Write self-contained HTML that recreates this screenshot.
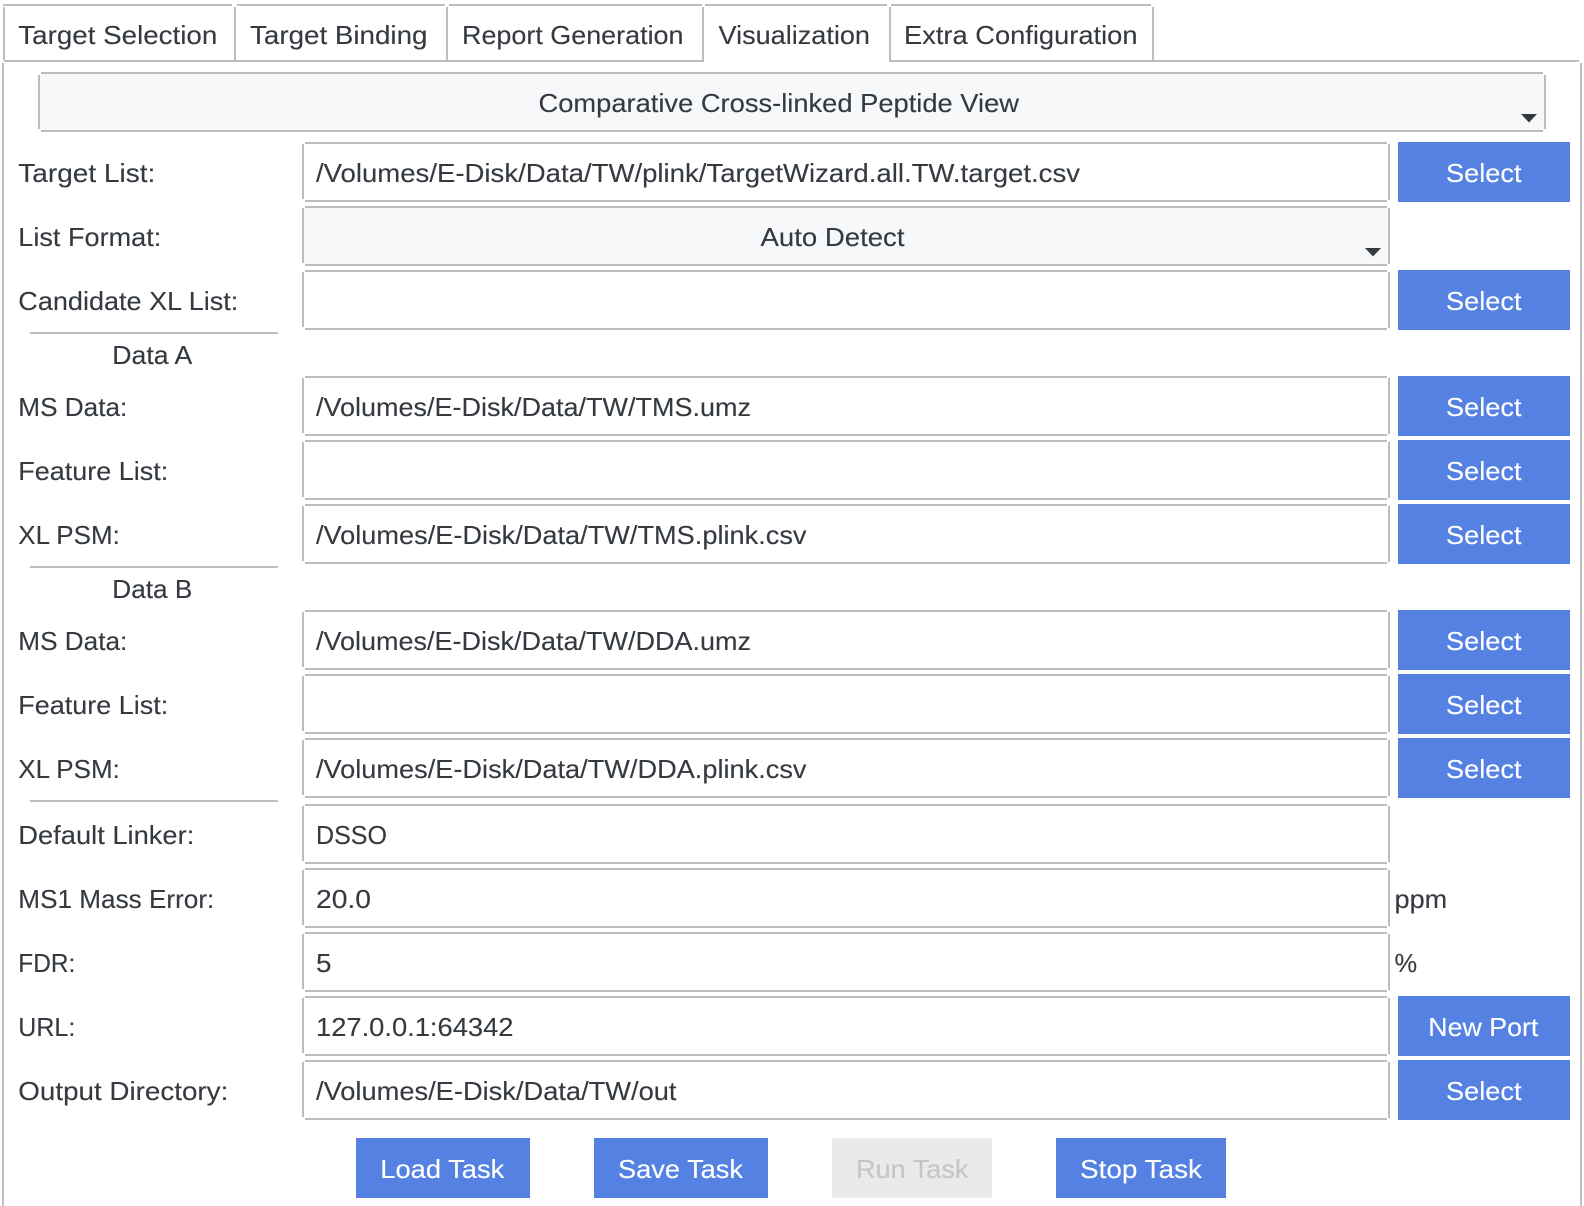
<!DOCTYPE html>
<html><head><meta charset="utf-8"><title>Visualization</title>
<style>
html,body{margin:0;padding:0;background:#fff;width:1584px;height:1206px;overflow:hidden}
svg{display:block}
text{font-family:"Liberation Sans",sans-serif;font-size:26px;fill:#343a40;stroke:#343a40;stroke-width:.12px}
.w{fill:#fff;stroke:#fff}.d{fill:#c4c6c6;stroke:#c4c6c6}
.b{fill:#bdbdbd;stroke:none}.p{fill:#5582e2}
</style></head><body>
<svg width="1584" height="1206" viewBox="0 0 1584 1206" xmlns="http://www.w3.org/2000/svg">
<defs>
<g id="inp">
<rect x="305" y="0" width="1082" height="2" class="b"/>
<rect x="302" y="2" width="2" height="55" class="b"/>
<rect x="305" y="58" width="1082" height="2" class="b"/>
<rect x="1388" y="2" width="2" height="56" class="b"/>
</g>
<rect id="btn" x="1398" y="0" width="172" height="60" class="p"/>
</defs>

<!-- tabs -->
<rect x="3" y="4" width="229" height="2" class="b"/>
<rect x="237" y="4" width="208" height="2" class="b"/>
<rect x="449" y="4" width="253" height="2" class="b"/>
<rect x="705" y="4" width="182" height="2" class="b"/>
<rect x="891" y="4" width="260" height="2" class="b"/>
<rect x="3" y="7" width="2" height="53" class="b"/>
<rect x="234" y="7" width="2" height="53" class="b"/>
<rect x="446" y="7" width="2" height="53" class="b"/>
<rect x="702" y="7" width="2" height="55" class="b"/>
<rect x="889" y="7" width="2" height="55" class="b"/>
<rect x="1152" y="7" width="2" height="53" class="b"/>
<rect x="4" y="60" width="700" height="2" class="b"/>
<rect x="889" y="60" width="690" height="2" class="b"/>
<rect x="2" y="63" width="2" height="1143" class="b"/>
<rect x="1580" y="63" width="2" height="1143" class="b"/>
<text x="18.3" y="44" textLength="199" lengthAdjust="spacingAndGlyphs">Target Selection</text>
<text x="250" y="44" textLength="177.500" lengthAdjust="spacingAndGlyphs">Target Binding</text>
<text x="462" y="44" textLength="221.500" lengthAdjust="spacingAndGlyphs">Report Generation</text>
<text x="718.500" y="44" textLength="151.500" lengthAdjust="spacingAndGlyphs">Visualization</text>
<text x="904" y="44" textLength="233.500" lengthAdjust="spacingAndGlyphs">Extra Configuration</text>

<!-- top select -->
<rect x="40" y="74" width="1504" height="56" fill="#f7f8f9"/>
<rect x="41" y="72" width="1502" height="2" class="b"/>
<rect x="38" y="75" width="2" height="54" class="b"/>
<rect x="41" y="130" width="1502" height="2" class="b"/>
<rect x="1544" y="75" width="2" height="54" class="b"/>
<polygon points="1521,114 1537,114 1529,122.5" fill="#343a40"/>
<text x="538.500" y="112" textLength="480.500" lengthAdjust="spacingAndGlyphs">Comparative Cross-linked Peptide View</text>

<!-- list format select -->
<rect x="304" y="208" width="1084" height="58" fill="#f7f8f9"/>
<use href="#inp" y="206"/>
<polygon points="1365,248 1381,248 1373,256.5" fill="#343a40"/>
<text x="760.500" y="246" textLength="144" lengthAdjust="spacingAndGlyphs">Auto Detect</text>

<!-- inputs -->
<use href="#inp" y="142"/><use href="#inp" y="270"/>
<use href="#inp" y="376"/><use href="#inp" y="440"/><use href="#inp" y="504"/>
<use href="#inp" y="610"/><use href="#inp" y="674"/><use href="#inp" y="738"/>
<use href="#inp" y="804"/><use href="#inp" y="868"/><use href="#inp" y="932"/>
<use href="#inp" y="996"/><use href="#inp" y="1060"/>

<!-- side buttons -->
<use href="#btn" y="142"/><use href="#btn" y="270"/>
<use href="#btn" y="376"/><use href="#btn" y="440"/><use href="#btn" y="504"/>
<use href="#btn" y="610"/><use href="#btn" y="674"/><use href="#btn" y="738"/>
<use href="#btn" y="996"/><use href="#btn" y="1060"/>
<text class="w" x="1446" y="182" textLength="75.500" lengthAdjust="spacingAndGlyphs">Select</text>
<text class="w" x="1446" y="310" textLength="75.500" lengthAdjust="spacingAndGlyphs">Select</text>
<text class="w" x="1446" y="416" textLength="75.500" lengthAdjust="spacingAndGlyphs">Select</text>
<text class="w" x="1446" y="480" textLength="75.500" lengthAdjust="spacingAndGlyphs">Select</text>
<text class="w" x="1446" y="544" textLength="75.500" lengthAdjust="spacingAndGlyphs">Select</text>
<text class="w" x="1446" y="650" textLength="75.500" lengthAdjust="spacingAndGlyphs">Select</text>
<text class="w" x="1446" y="714" textLength="75.500" lengthAdjust="spacingAndGlyphs">Select</text>
<text class="w" x="1446" y="778" textLength="75.500" lengthAdjust="spacingAndGlyphs">Select</text>
<text class="w" x="1428.300" y="1036" textLength="110" lengthAdjust="spacingAndGlyphs">New Port</text>
<text class="w" x="1446" y="1100" textLength="75.500" lengthAdjust="spacingAndGlyphs">Select</text>

<!-- separators -->
<rect x="30" y="332" width="248" height="2" class="b"/>
<rect x="30" y="566" width="248" height="2" class="b"/>
<rect x="30" y="800" width="248" height="2" class="b"/>

<!-- labels -->
<text x="18.300" y="182" textLength="137" lengthAdjust="spacingAndGlyphs">Target List:</text>
<text x="18.300" y="246" textLength="143" lengthAdjust="spacingAndGlyphs">List Format:</text>
<text x="18.300" y="310" textLength="220" lengthAdjust="spacingAndGlyphs">Candidate XL List:</text>
<text x="112.300" y="364" textLength="80" lengthAdjust="spacingAndGlyphs">Data A</text>
<text x="18.300" y="416" textLength="109" lengthAdjust="spacingAndGlyphs">MS Data:</text>
<text x="18.300" y="480" textLength="150" lengthAdjust="spacingAndGlyphs">Feature List:</text>
<text x="18.300" y="544" textLength="101.500" lengthAdjust="spacingAndGlyphs">XL PSM:</text>
<text x="112.300" y="598" textLength="80" lengthAdjust="spacingAndGlyphs">Data B</text>
<text x="18.300" y="650" textLength="109" lengthAdjust="spacingAndGlyphs">MS Data:</text>
<text x="18.300" y="714" textLength="150" lengthAdjust="spacingAndGlyphs">Feature List:</text>
<text x="18.300" y="778" textLength="101.500" lengthAdjust="spacingAndGlyphs">XL PSM:</text>
<text x="18.300" y="844" textLength="176" lengthAdjust="spacingAndGlyphs">Default Linker:</text>
<text x="18.300" y="908" textLength="196" lengthAdjust="spacingAndGlyphs">MS1 Mass Error:</text>
<text x="18.300" y="972" textLength="57" lengthAdjust="spacingAndGlyphs">FDR:</text>
<text x="18.300" y="1036" textLength="57" lengthAdjust="spacingAndGlyphs">URL:</text>
<text x="18.300" y="1100" textLength="210" lengthAdjust="spacingAndGlyphs">Output Directory:</text>

<!-- values -->
<text x="316" y="182" textLength="764" lengthAdjust="spacingAndGlyphs">/Volumes/E-Disk/Data/TW/plink/TargetWizard.all.TW.target.csv</text>
<text x="316" y="416" textLength="435" lengthAdjust="spacingAndGlyphs">/Volumes/E-Disk/Data/TW/TMS.umz</text>
<text x="316" y="544" textLength="490.500" lengthAdjust="spacingAndGlyphs">/Volumes/E-Disk/Data/TW/TMS.plink.csv</text>
<text x="316" y="650" textLength="435" lengthAdjust="spacingAndGlyphs">/Volumes/E-Disk/Data/TW/DDA.umz</text>
<text x="316" y="778" textLength="490.500" lengthAdjust="spacingAndGlyphs">/Volumes/E-Disk/Data/TW/DDA.plink.csv</text>
<text x="316" y="844" textLength="71" lengthAdjust="spacingAndGlyphs">DSSO</text>
<text x="316" y="908" textLength="55" lengthAdjust="spacingAndGlyphs">20.0</text>
<text x="316" y="972" textLength="15.500" lengthAdjust="spacingAndGlyphs">5</text>
<text x="316" y="1036" textLength="197.500" lengthAdjust="spacingAndGlyphs">127.0.0.1:64342</text>
<text x="316" y="1100" textLength="360.500" lengthAdjust="spacingAndGlyphs">/Volumes/E-Disk/Data/TW/out</text>
<text x="1394.500" y="908" textLength="52.700" lengthAdjust="spacingAndGlyphs">ppm</text>
<text x="1394.500" y="972" textLength="22.700" lengthAdjust="spacingAndGlyphs">%</text>

<!-- bottom buttons -->
<rect x="356" y="1138" width="174" height="60" class="p"/>
<rect x="594" y="1138" width="174" height="60" class="p"/>
<rect x="832" y="1138" width="160" height="60" fill="#e9eaea"/>
<rect x="1056" y="1138" width="170" height="60" class="p"/>
<text class="w" x="380.300" y="1178" textLength="124" lengthAdjust="spacingAndGlyphs">Load Task</text>
<text class="w" x="618" y="1178" textLength="125" lengthAdjust="spacingAndGlyphs">Save Task</text>
<text class="d" x="856" y="1178" textLength="112.500" lengthAdjust="spacingAndGlyphs">Run Task</text>
<text class="w" x="1080" y="1178" textLength="122" lengthAdjust="spacingAndGlyphs">Stop Task</text>
</svg>
</body></html>
